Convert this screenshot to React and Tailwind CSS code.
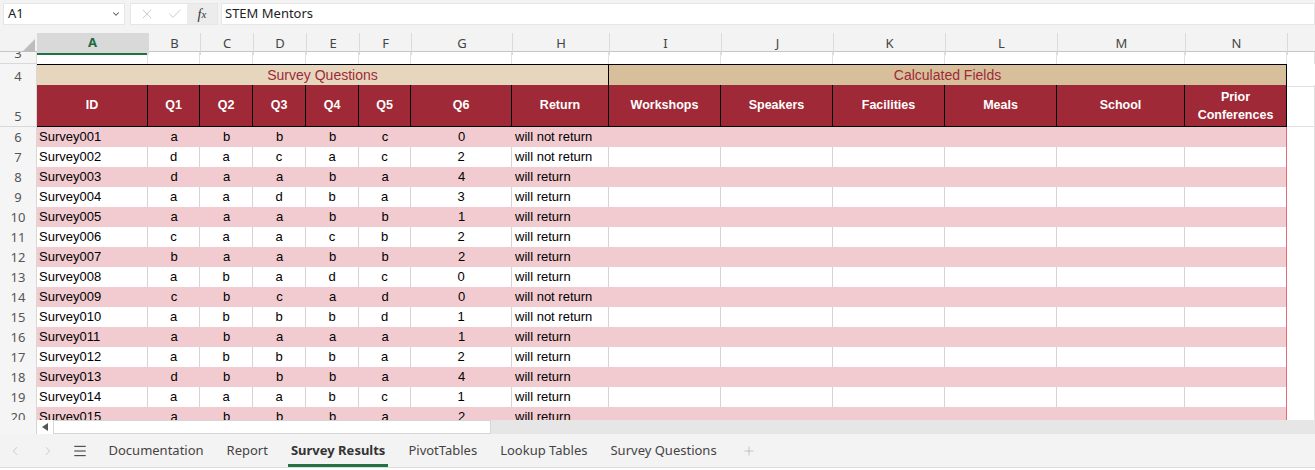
import { ChevronDown, X, Check, ChevronLeft, ChevronRight, Menu, Plus } from "lucide-react";

const COLS =
  "grid grid-cols-[37px_111px_52px_53px_53px_53px_52px_101px_97px_112px_112px_112px_112px_128px_102px_1fr]";

const letters = ["A", "B", "C", "D", "E", "F", "G", "H", "I", "J", "K", "L", "M", "N", ""];

const heads = ["ID", "Q1", "Q2", "Q3", "Q4", "Q5", "Q6", "Return", "Workshops", "Speakers", "Facilities", "Meals", "School"];

const rows = [
  ["Survey001", "a", "b", "b", "b", "c", "0", "will not return"],
  ["Survey002", "d", "a", "c", "a", "c", "2", "will not return"],
  ["Survey003", "d", "a", "a", "b", "a", "4", "will return"],
  ["Survey004", "a", "a", "d", "b", "a", "3", "will return"],
  ["Survey005", "a", "a", "a", "b", "b", "1", "will return"],
  ["Survey006", "c", "a", "a", "c", "b", "2", "will return"],
  ["Survey007", "b", "a", "a", "b", "b", "2", "will return"],
  ["Survey008", "a", "b", "a", "d", "c", "0", "will return"],
  ["Survey009", "c", "b", "c", "a", "d", "0", "will not return"],
  ["Survey010", "a", "b", "b", "b", "d", "1", "will not return"],
  ["Survey011", "a", "b", "a", "a", "a", "1", "will return"],
  ["Survey012", "a", "b", "b", "b", "a", "2", "will return"],
  ["Survey013", "d", "b", "b", "b", "a", "4", "will return"],
  ["Survey014", "a", "a", "a", "b", "c", "1", "will return"],
  ["Survey015", "a", "b", "b", "b", "a", "2", "will return"],
];

const tabs = ["Documentation", "Report", "Survey Results", "PivotTables", "Lookup Tables", "Survey Questions"];

const ui = "font-['Noto_Sans',sans-serif]";
const cellFont = "font-['Liberation_Sans',Arial,sans-serif]";

function RowNum({ n, className = "" }) {
  return (
    <div
      className={`${ui} flex items-end justify-center overflow-hidden bg-[#f5f5f5] border-r border-b border-[#d9d9d9] text-[13px] text-[#555] ${className}`}
    >
      <span className="leading-[19px]">{n}</span>
    </div>
  );
}

function DataRow({ n, r }) {
  const pink = n % 2 === 0;
  const bg = pink ? "bg-[#f2cbd0]" : "bg-white";
  const base = `${bg} border-b border-b-[#e06c78] ${pink ? "" : "border-r border-r-[#d4d4d4]"}`;
  const extra = ["", "", "", "", "", ""];
  return (
    <div className={`${COLS} h-[20px] shrink-0 ${cellFont} text-[13px] text-black`}>
      <RowNum n={n} />
      <div className={`${base} pl-[2px] flex items-center`}>{r[0]}</div>
      {r.slice(1, 7).map((v, i) => (
        <div key={i} className={`${base} flex items-center justify-center`}>
          {v}
        </div>
      ))}
      <div className={`${base} pl-[3px] flex items-center`}>{r[7]}</div>
      {extra.map((_, i) =>
        i === 5 ? (
          <div key={i} className={`${bg} border-b border-r border-[#e06c78]`} />
        ) : (
          <div key={i} className={base} />
        )
      )}
      <div className="bg-white border-b border-r border-[#e1e1e1]" />
    </div>
  );
}

export default function App() {
  return (
    <div className="w-[1315px] h-[470px] overflow-hidden bg-white flex flex-col">
      {/* formula bar */}
      <div className={`${ui} h-[33px] shrink-0 bg-[#f3f3f3] flex items-start pt-[3px] pl-[3px] text-[13px] text-[#222]`}>
        <div className="w-[122px] h-[22px] bg-white border border-[#e6e6e6] flex items-center justify-between pl-[4px] pr-[3px]">
          <span>A1</span>
          <ChevronDown className="w-[10px] h-[10px] text-[#555]" strokeWidth={2.5} />
        </div>
        <div className="ml-[5px] w-[88px] h-[22px] bg-white border border-[#e6e6e6] flex items-center">
          <X className="ml-[8px] w-[16px] h-[16px] text-[#bdbdbd]" strokeWidth={1.2} />
          <Check className="ml-[12px] w-[16px] h-[16px] text-[#bdbdbd]" strokeWidth={1.2} />
          <div className="ml-auto w-[30px] h-full bg-[#ececec] flex items-center justify-center font-['Liberation_Serif',serif] italic text-[14px] text-[#333]">
            f<span className="text-[11px]">x</span>
          </div>
        </div>
        <div className="ml-[3px] flex-1 h-[22px] bg-white border border-[#e6e6e6] flex items-center pl-[3px] text-[13px]">
          STEM Mentors
        </div>
      </div>

      {/* column headers */}
      <div className={`${COLS} h-[19px] shrink-0 bg-[#f3f3f3] ${ui} text-[13px] text-[#444] border-b border-[#c6c6c6]`}>
        <div className="flex items-end justify-end pr-[2px] pb-[2px]">
          <svg width="14" height="14" viewBox="0 0 14 14">
            <polygon points="14,0 14,14 0,14" fill="#bdbdbd" />
          </svg>
        </div>
        {letters.map((l, i) =>
          i === 0 ? (
            <div key={i} className="bg-[#d9d9d9] border-b-2 border-[#217346] flex items-center justify-center font-bold text-[#1e6b3f]">
              {l}
            </div>
          ) : (
            <div key={i} className="border-l border-[#dadada] flex items-center justify-center">
              {l}
            </div>
          )
        )}
      </div>

      {/* sheet body */}
      <div className="h-[368px] shrink-0 overflow-hidden flex flex-col">
        {/* row 3 */}
        <div className={`${COLS} h-[12px] shrink-0`}>
          <RowNum n={3} />
          {letters.map((_, i) => (
            <div key={i} className="border-r border-[#e1e1e1]" />
          ))}
        </div>

        {/* row 4 */}
        <div className={`${COLS} h-[21px] shrink-0 ${cellFont}`}>
          <RowNum n={4} />
          <div className="col-span-8 bg-[#e7d6be] border-y border-r border-black flex items-center justify-center text-[14px] text-[#9c2b37]">
            Survey Questions
          </div>
          <div className="col-span-6 bg-[#d8bf9b] border-y border-r border-black flex items-center justify-center text-[14px] text-[#9c2b37]">
            Calculated Fields
          </div>
          <div className="border-b border-[#e1e1e1]" />
        </div>

        {/* row 5 */}
        <div className={`${COLS} h-[42px] shrink-0 ${cellFont}`}>
          <RowNum n={5} />
          {heads.map((h) => (
            <div
              key={h}
              className="bg-[#9f2936] border-r border-b border-black flex items-center justify-center text-white font-bold text-[12.5px]"
            >
              {h}
            </div>
          ))}
          <div className="bg-[#9f2936] border-r border-b border-black flex flex-col items-center justify-center text-white font-bold text-[12.5px] leading-[18px]">
            <span>Prior</span>
            <span>Conferences</span>
          </div>
          <div className="border-b border-r border-[#e1e1e1]" />
        </div>

        {rows.map((r, i) => (
          <DataRow key={i} n={i + 6} r={r} />
        ))}
      </div>

      {/* horizontal scrollbar */}
      <div className="h-[14px] shrink-0 flex">
        <div className="w-[37px] bg-[#f5f5f5] border-r border-[#d4d4d4]" />
        <div className="w-[16px] bg-white flex items-center justify-center">
          <svg width="6" height="8" viewBox="0 0 6 8">
            <polygon points="6,0 6,8 0,4" fill="#555" />
          </svg>
        </div>
        <div className="w-[438px] bg-white border border-[#d6d6d6]" />
        <div className="flex-1 bg-[#e6e6e6]" />
      </div>

      {/* sheet tabs */}
      <div className={`${ui} h-[34px] shrink-0 bg-[#f3f3f3] border-b border-[#dcdcdc] flex items-center text-[13px] text-[#444]`}>
        <ChevronLeft className="ml-[8px] w-[14px] h-[14px] text-[#c4c4c4]" strokeWidth={1.5} />
        <ChevronRight className="ml-[19px] w-[14px] h-[14px] text-[#c4c4c4]" strokeWidth={1.5} />
        <Menu className="ml-[17px] w-[16px] h-[16px] text-[#333]" strokeWidth={1.5} />
        <div className="ml-[9px] flex h-full">
          {tabs.map((t) =>
            t === "Survey Results" ? (
              <div key={t} className="relative px-[11.5px] flex items-center font-bold text-[#333]">
                {t}
                <div className="absolute left-[9px] right-[9px] bottom-0 h-[3px] bg-[#217346]" />
              </div>
            ) : (
              <div key={t} className="px-[11.5px] flex items-center">
                {t}
              </div>
            )
          )}
        </div>
        <Plus className="ml-[14px] w-[14px] h-[14px] text-[#b5b5b5]" strokeWidth={1.3} />
      </div>
    </div>
  );
}
